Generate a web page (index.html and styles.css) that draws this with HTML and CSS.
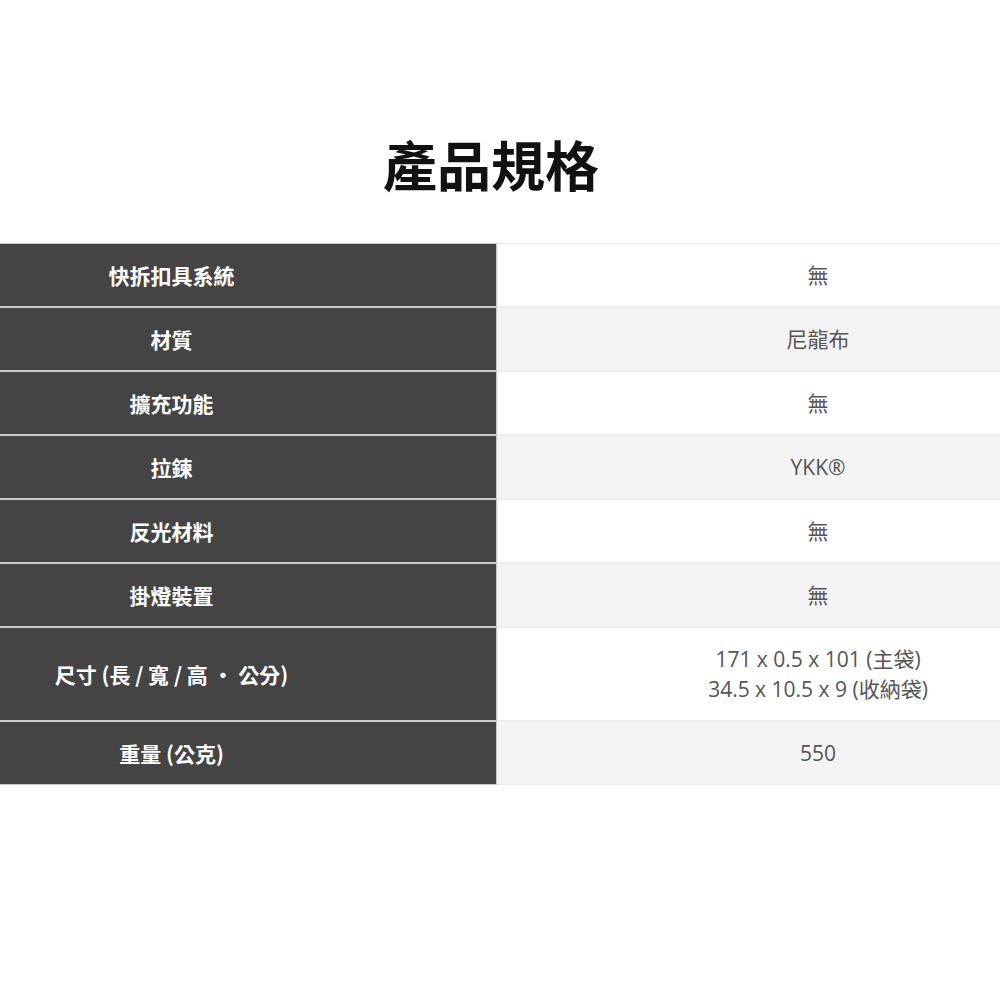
FILE: index.html
```html
<!DOCTYPE html>
<html lang="zh-Hant">
<head>
<meta charset="utf-8">
<link rel="stylesheet" href="styles.css">
</head>
<body>
<h2 class="title">產品規格</h2>
<table class="spec">
  <tbody>
    <tr><th>快拆扣具系統</th><td>無</td></tr>
    <tr class="alt"><th>材質</th><td>尼龍布</td></tr>
    <tr><th>擴充功能</th><td>無</td></tr>
    <tr class="alt"><th>拉鍊</th><td>YKK®</td></tr>
    <tr><th>反光材料</th><td>無</td></tr>
    <tr class="alt"><th>掛燈裝置</th><td>無</td></tr>
    <tr><th>尺寸 (長 / 寬 / 高 · 公分)</th><td>171 x 0.5 x 101 (主袋)<br>34.5 x 10.5 x 9 (收納袋)</td></tr>
    <tr class="alt"><th>重量 (公克)</th><td>550</td></tr>
  </tbody>
</table>
</body>
</html>
```
FILE: styles.css
```css
html, body {
  margin: 0;
  padding: 0;
  background: #ffffff;
}
body {
  font-family: "Noto Sans CJK TC", "Noto Sans", sans-serif;
}
.title {
  margin: 132px 0 47px;
  font-size: 54px;
  line-height: 64px;
  font-weight: 700;
  color: #111111;
  text-align: center;
  padding-right: 18px;
}
.spec {
  width: 1000px;
  border-collapse: separate;
  border-spacing: 0;
  table-layout: fixed;
}
.spec th,
.spec td {
  padding: 16px 0;
  line-height: 30px;
  text-align: center;
  vertical-align: middle;
}
.spec th {
  width: 343px;
  padding-right: 153px;
  background: #444444;
  color: #ffffff;
  font-size: 21px;
  font-weight: 700;
  border: 1px solid #c8c8c8;
  border-left-width: 0;
}
.spec td {
  padding-left: 138px;
  background: #ffffff;
  color: #555555;
  font-family: "Open Sans", "Noto Sans CJK TC", sans-serif;
  font-size: 21px;
  font-weight: 400;
  border: 1px solid #eeeeee;
  border-right-width: 0;
}
.spec tr.alt td {
  background: #f4f4f4;
}
```
